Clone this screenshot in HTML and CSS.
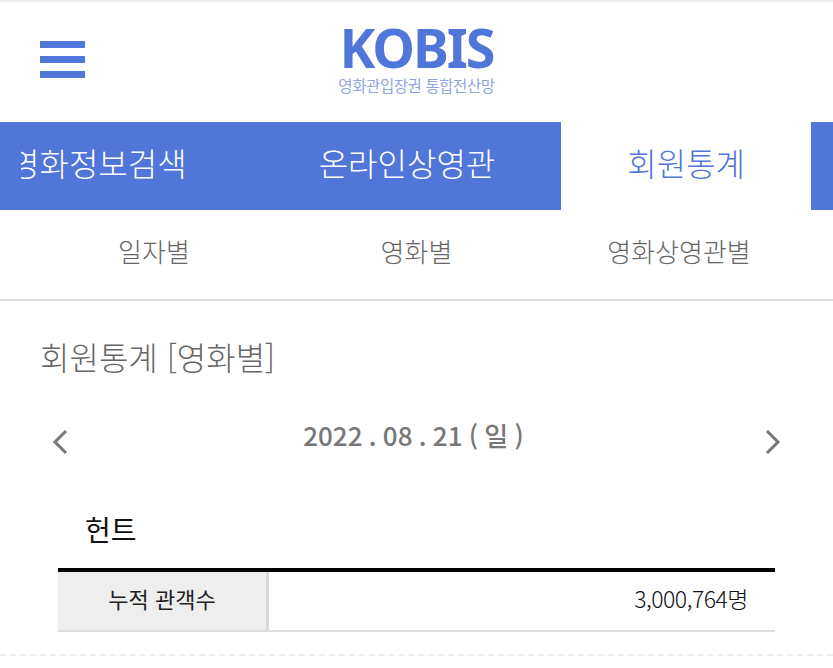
FILE: index.html
```html
<!DOCTYPE html>
<html lang="ko">
  <head>
    <title>KOBIS 회원통계</title>
    <meta charset="utf-8" />
    <meta name="viewport" content="width=device-width, initial-scale=1.0" />
    <link rel="stylesheet" href="styles.css">
  </head>
  <body>
    <header class="header">
      <div class="menu-btn"><span></span><span></span><span></span></div>
      <div class="logo">
        <div class="logo-name">KOBIS</div>
        <div class="logo-sub">영화관입장권 통합전산망</div>
      </div>
    </header>
    <nav class="tabs">
      <a class="tab tab-clipped"><span>영화정보검색</span></a>
      <a class="tab">온라인상영관</a>
      <a class="tab active">회원통계</a>
    </nav>
    <nav class="subnav">
      <a>일자별</a>
      <a>영화별</a>
      <a>영화상영관별</a>
    </nav>
    <main class="content">
      <h2 class="page-title">회원통계 [영화별]</h2>
      <div class="date-row">
        <svg class="arrow" width="18" height="28" viewBox="0 0 18 28"><path d="M15 3 L4 14 L15 25" /></svg>
        <p class="date">2022 . 08 . 21 ( 일 )</p>
        <svg class="arrow" width="18" height="28" viewBox="0 0 18 28"><path d="M3 3 L14 14 L3 25" /></svg>
      </div>
      <h3 class="movie">헌트</h3>
      <div class="stat-table">
        <div class="stat-label">누적 관객수</div>
        <div class="stat-value">3,000,764명</div>
      </div>
    </main>
    <div class="dash-line"></div>
  </body>
</html>
```

FILE: styles.css
```css
body {
  margin: 0;
  background-color: #fff;
  font-family: "Noto Sans CJK KR", "Noto Sans", sans-serif;
  overflow: hidden;
}
.header {
  height: 119px;
  border-top: 2px solid #eee;
  border-bottom: 1px solid #fff;
  display: flex;
  justify-content: center;
  position: relative;
}
.menu-btn {
  position: absolute;
  left: 40px;
  top: 39px;
  width: 45px;
  display: flex;
  flex-direction: column;
  gap: 8px;
}
.menu-btn span {
  height: 7px;
  background-color: #4f76d8;
}
.logo {
  display: flex;
  flex-direction: column;
  align-items: center;
  padding-top: 15px;
}
.logo-name {
  font-family: "Noto Sans", sans-serif;
  font-size: 54px;
  line-height: 60px;
  font-weight: 700;
  letter-spacing: -2px;
  color: #4f76d8;
}
.logo-sub {
  font-size: 15.5px;
  line-height: 16px;
  letter-spacing: -0.4px;
  color: #8ea6e0;
}
.tabs {
  height: 88px;
  background-color: #4f76d8;
  display: flex;
  color: #fff;
  font-size: 32px;
  font-weight: 300;
  overflow: hidden;
}
.tab {
  padding: 0 66px 8px;
  display: flex;
  align-items: center;
  white-space: nowrap;
}
.tab-clipped {
  margin-left: -56px;
}
.tab-clipped span {
  clip-path: inset(0 0 0 11px);
}
.tab.active {
  background-color: #fff;
  color: #4f76d8;
}
.subnav {
  height: 81px;
  padding-bottom: 8px;
  display: grid;
  grid-template-columns: 308px 1fr 308px;
  align-items: center;
  text-align: center;
  font-size: 26px;
  font-weight: 300;
  color: #666;
  border-bottom: 2px solid #ddd;
}
.content {
  padding: 0 58px;
}
.page-title {
  margin: 32px 0 0 -18px;
  font-size: 32px;
  line-height: 46px;
  font-weight: 300;
  color: #666;
}
.date-row {
  margin: 37px 0 0 -7px;
  width: 731px;
  display: flex;
  justify-content: space-between;
  align-items: center;
}
.arrow {
  fill: none;
  stroke: #777;
  stroke-width: 3;
}
.date {
  margin: 0 6px 14px 0;
  font-size: 26px;
  line-height: 38px;
  font-weight: 500;
  word-spacing: -1px;
  color: #777;
}
.movie {
  margin: 40px 0 0 27px;
  font-size: 28px;
  line-height: 42px;
  font-weight: 400;
  color: #111;
}
.stat-table {
  margin-top: 18px;
  border-top: 4px solid #000;
  border-bottom: 2px solid #ddd;
  display: grid;
  grid-template-columns: 211px 1fr;
  height: 58px;
}
.stat-label {
  background-color: #eee;
  border-right: 3px solid #d9d9d9;
  padding-bottom: 6px;
  display: flex;
  align-items: center;
  justify-content: center;
  font-size: 22px;
  font-weight: 400;
  color: #222;
}
.stat-value {
  display: flex;
  align-items: center;
  justify-content: flex-end;
  padding: 0 27px 6px 0;
  font-size: 23px;
  font-weight: 300;
  letter-spacing: -0.5px;
  color: #111;
}
.dash-line {
  margin-top: 22px;
  border-top: 2px dashed #eee;
}
```
